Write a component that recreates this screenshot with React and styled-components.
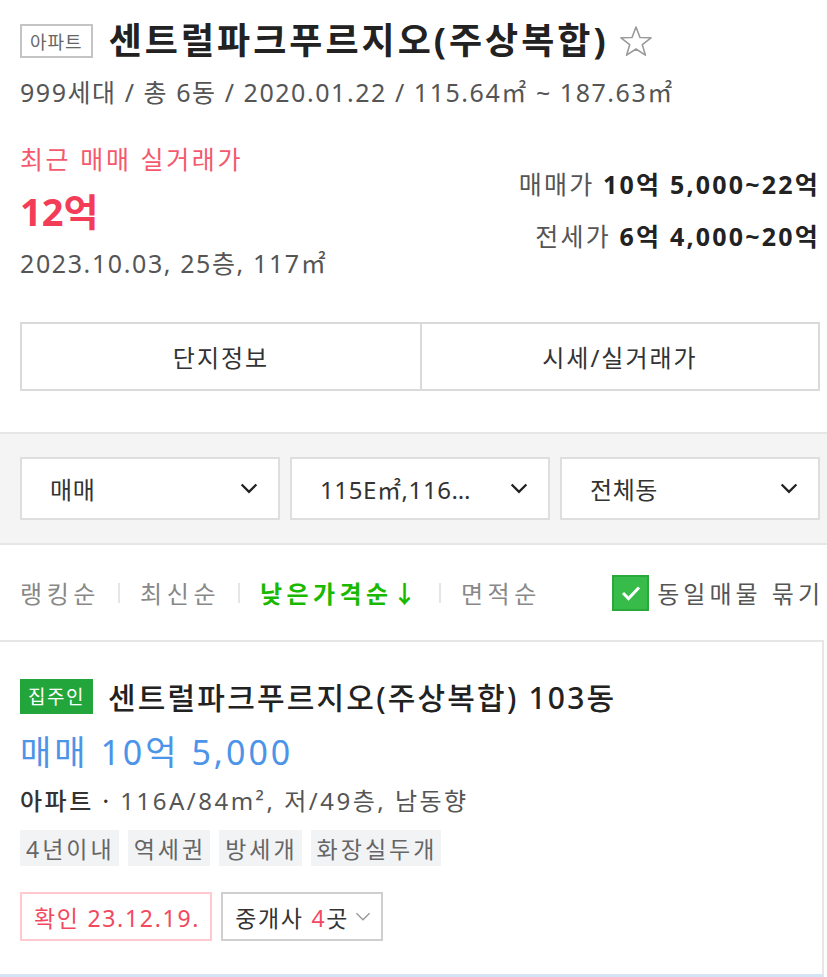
import React from "react";
import styled, { createGlobalStyle } from "styled-components";

const GlobalStyle = createGlobalStyle`
  body {
    margin: 0;
    background: #fff;
    font-family: "Noto Sans", "Noto Sans CJK KR", sans-serif;
    color: #222;
  }
  * { box-sizing: border-box; }
`;

const Page = styled.div`
  width: 827px;
  overflow: hidden;
`;

const Top = styled.section`
  padding: 20px 7px 0 20px;
`;

const Header = styled.div`
  display: flex;
  align-items: center;
  gap: 16px;
  height: 42px;
`;

const TypeBadge = styled.span`
  display: inline-flex;
  align-items: center;
  height: 34px;
  padding: 0 8px;
  border: 2px solid #c4c4c4;
  color: #666;
  font-size: 18px;
  letter-spacing: 1px;
`;

const Title = styled.h1`
  margin: 0;
  font-size: 36px;
  font-weight: 700;
  line-height: 42px;
  letter-spacing: 3px;
  color: #222;
  display: flex;
  align-items: center;
  gap: 10px;
`;

const Sub = styled.div`
  margin-top: 15px;
  font-size: 25px;
  line-height: 30px;
  letter-spacing: 1.55px;
  color: #555;
`;

const Summary = styled.div`
  display: flex;
  justify-content: space-between;
  margin-top: 37px;
`;

const RecentLabel = styled.div`
  font-size: 25px;
  line-height: 30px;
  letter-spacing: 2.6px;
  color: #f5596d;
`;

const RecentPrice = styled.div`
  margin-top: 15px;
  font-size: 38px;
  font-weight: 700;
  line-height: 44px;
  color: #f33d57;
`;

const RecentInfo = styled.div`
  margin-top: 15px;
  font-size: 25px;
  line-height: 30px;
  letter-spacing: 1.6px;
  color: #555;
`;

const Ranges = styled.div`
  margin-top: 14px;
  text-align: right;
`;

const RangeLine = styled.div`
  font-size: 25px;
  line-height: 52px;
  letter-spacing: 2.2px;
  color: #555;
  b {
    color: #222;
    font-weight: 700;
  }
`;

const Tabs = styled.div`
  display: grid;
  grid-template-columns: repeat(2, minmax(0, 1fr));
  margin-top: 44px;
  height: 69px;
  border: 2px solid #dadada;
`;

const Tab = styled.div`
  display: flex;
  align-items: center;
  justify-content: center;
  font-size: 24px;
  letter-spacing: 2px;
  color: #333;
  & + & {
    border-left: 2px solid #dadada;
  }
`;

const FilterBand = styled.div`
  margin-top: 41px;
  background: #f4f4f4;
  border-top: 2px solid #e6e6e6;
  border-bottom: 2px solid #e6e6e6;
  padding: 23px 7px 23px 20px;
  display: grid;
  grid-template-columns: repeat(3, minmax(0, 1fr));
  gap: 10px;
`;

const Select = styled.div`
  display: flex;
  align-items: center;
  justify-content: space-between;
  gap: 36px;
  height: 63px;
  padding: 0 20px 0 28px;
  background: #fff;
  border: 2px solid #dedede;
  font-size: 24px;
  letter-spacing: 0.6px;
  color: #333;
  span {
    flex: 1;
    min-width: 0;
    white-space: nowrap;
    overflow: hidden;
    text-overflow: ellipsis;
  }
  svg {
    flex: none;
  }
`;

const SortRow = styled.div`
  display: flex;
  align-items: center;
  height: 95px;
  padding: 0 3px 0 20px;
  font-size: 24px;
  letter-spacing: 4px;
`;

const SortItem = styled.span`
  color: ${(p) => (p.$active ? "#19b900" : "#888")};
  font-weight: ${(p) => (p.$active ? 700 : 400)};
  letter-spacing: ${(p) => (p.$active ? "4.4px" : "4.6px")};
`;

const SortDivider = styled.i`
  width: 2px;
  height: 20px;
  margin: 0 20px 0 18px;
  background: #e6e6e6;
`;

const Bundle = styled.label`
  margin-left: auto;
  display: flex;
  align-items: center;
  gap: 8px;
  color: #555;
  white-space: nowrap;
`;

const Check = styled.span`
  width: 37px;
  height: 36px;
  background: #37bb49;
  border: 2px solid #2aa83b;
  display: flex;
  align-items: center;
  justify-content: center;
`;

const Card = styled.article`
  width: 824px;
  border-top: 2px solid #e6e6e6;
  border-right: 2px solid #e6e6e6;
  border-bottom: 3px solid #d4e4f7;
  padding: 36px 0 33px 20px;
`;

const CardHead = styled.div`
  display: flex;
  align-items: center;
  gap: 15px;
  height: 36px;
`;

const OwnerBadge = styled.span`
  display: inline-flex;
  align-items: center;
  height: 35px;
  padding: 0 8px;
  background: #22a63b;
  color: #fff;
  font-size: 19px;
  letter-spacing: 1.5px;
`;

const CardTitle = styled.div`
  font-size: 30px;
  font-weight: 500;
  letter-spacing: 2.2px;
  color: #222;
`;

const Price = styled.div`
  margin-top: 18px;
  font-size: 34px;
  line-height: 40px;
  letter-spacing: 3px;
  color: #4c94e8;
`;

const Spec = styled.div`
  margin-top: 13px;
  font-size: 24px;
  line-height: 32px;
  letter-spacing: 2.5px;
  color: #555;
  b {
    color: #333;
    font-weight: 500;
  }
`;

const Tags = styled.div`
  display: flex;
  gap: 9px;
  margin-top: 13px;
`;

const Tag = styled.span`
  display: inline-flex;
  align-items: center;
  height: 36px;
  padding: 0 4px 0 6px;
  background: #f2f3f5;
  color: #666;
  font-size: 23px;
  letter-spacing: 3px;
`;

const Actions = styled.div`
  display: flex;
  gap: 9px;
  margin-top: 26px;
`;

const ActionBox = styled.span`
  display: inline-flex;
  align-items: center;
  gap: 6px;
  height: 49px;
  padding: 0 10px 0 12px;
  border: 2px solid ${(p) => (p.$tone === "red" ? "#ffc9cf" : "#cfcfcf")};
  color: ${(p) => (p.$tone === "red" ? "#f2495e" : "#333")};
  font-size: 23px;
  letter-spacing: 1.7px;
  em {
    font-style: normal;
    color: #f2495e;
  }
`;

const Chevron = ({ size = 18, color = "#222", width = 2.4 }) => (
  <svg width={size} height={size * 0.6} viewBox="0 0 18 11" fill="none">
    <polyline points="1.5,1.5 9,9 16.5,1.5" stroke={color} strokeWidth={width} />
  </svg>
);

const Star = () => (
  <svg width="34" height="32" viewBox="0 0 34 32" fill="none">
    <polygon
      points="17,2 21,12.5 32,12.8 23.3,19.6 26.4,30.2 17,24 7.6,30.2 10.7,19.6 2,12.8 13,12.5"
      stroke="#9a9a9a"
      strokeWidth="1.6"
      strokeLinejoin="round"
    />
  </svg>
);

const sorts = [
  { label: "랭킹순" },
  { label: "최신순" },
  { label: "낮은가격순↓", active: true },
  { label: "면적순" },
];

const filters = ["매매", "115E㎡,116A㎡,116B㎡", "전체동"];
const tags = ["4년이내", "역세권", "방세개", "화장실두개"];

export default function App() {
  return (
    <Page>
      <GlobalStyle />
      <Top>
        <Header>
          <TypeBadge>아파트</TypeBadge>
          <Title>
            센트럴파크푸르지오(주상복합)
            <Star />
          </Title>
        </Header>
        <Sub>999세대 / 총 6동 / 2020.01.22 / 115.64㎡ ~ 187.63㎡</Sub>
        <Summary>
          <div>
            <RecentLabel>최근 매매 실거래가</RecentLabel>
            <RecentPrice>12억</RecentPrice>
            <RecentInfo>2023.10.03, 25층, 117㎡</RecentInfo>
          </div>
          <Ranges>
            <RangeLine>
              매매가 <b>10억 5,000~22억</b>
            </RangeLine>
            <RangeLine>
              전세가 <b>6억 4,000~20억</b>
            </RangeLine>
          </Ranges>
        </Summary>
        <Tabs>
          <Tab>단지정보</Tab>
          <Tab>시세/실거래가</Tab>
        </Tabs>
      </Top>

      <FilterBand>
        {filters.map((f) => (
          <Select key={f}>
            <span>{f}</span>
            <Chevron />
          </Select>
        ))}
      </FilterBand>

      <SortRow>
        {sorts.map((s, i) => (
          <React.Fragment key={s.label}>
            {i > 0 && <SortDivider />}
            <SortItem $active={s.active}>{s.label}</SortItem>
          </React.Fragment>
        ))}
        <Bundle>
          <Check>
            <svg width="20" height="16" viewBox="0 0 20 16" fill="none">
              <polyline points="2,8 7.5,13.5 18,2.5" stroke="#fff" strokeWidth="3" />
            </svg>
          </Check>
          동일매물 묶기
        </Bundle>
      </SortRow>

      <Card>
        <CardHead>
          <OwnerBadge>집주인</OwnerBadge>
          <CardTitle>센트럴파크푸르지오(주상복합) 103동</CardTitle>
        </CardHead>
        <Price>매매 10억 5,000</Price>
        <Spec>
          <b>아파트 · </b>116A/84m², 저/49층, 남동향
        </Spec>
        <Tags>
          {tags.map((t) => (
            <Tag key={t}>{t}</Tag>
          ))}
        </Tags>
        <Actions>
          <ActionBox $tone="red">확인 23.12.19.</ActionBox>
          <ActionBox>
            <span>
              중개사 <em>4</em>곳
            </span>
            <Chevron size={16} color="#999" width={1.6} />
          </ActionBox>
        </Actions>
      </Card>
    </Page>
  );
}
